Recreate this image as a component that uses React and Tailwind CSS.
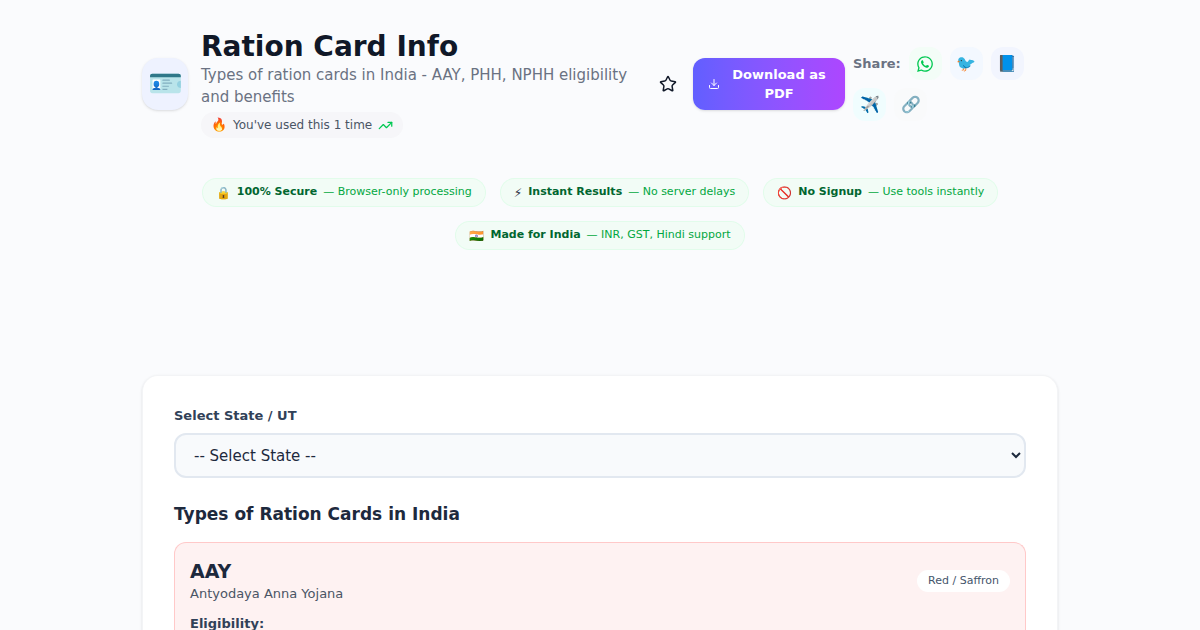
import React, { useState } from "react";
import { FaWhatsapp } from "react-icons/fa";
import { Star, TrendingUp, Download } from "lucide-react";

const trustBadges = [
  { icon: "🔒", title: "100% Secure", text: "Browser-only processing" },
  { icon: "⚡︎", title: "Instant Results", text: "No server delays" },
  { icon: "🚫", title: "No Signup", text: "Use tools instantly" },
  { icon: "🇮🇳", title: "Made for India", text: "INR, GST, Hindi support" },
];

const shareLinks = [
  { label: "WhatsApp", icon: <FaWhatsapp className="size-[18px]" />, style: "bg-green-50/70 text-green-500" },
  { label: "Twitter", icon: "🐦", style: "bg-blue-50/70" },
  { label: "Facebook", icon: "📘", style: "bg-indigo-50/70" },
  { label: "Telegram", icon: "✈️", style: "bg-cyan-50/70" },
  { label: "Copy link", icon: "🔗", style: "bg-gray-50" },
];

function Header() {
  return (
    <header className="flex items-center">
      <div className="flex h-[52px] w-[46px] shrink-0 items-center justify-center rounded-2xl bg-indigo-50 text-[28px] leading-none shadow-sm">
        🪪
      </div>

      <div className="ml-[13px] min-w-0 flex-1">
        <h1 className="text-[28px] leading-[34px] font-bold text-gray-900">Ration Card Info</h1>
        <p className="text-[15px] leading-[22px] text-gray-500">
          Types of ration cards in India - AAY, PHH, NPHH eligibility and benefits
        </p>
        <div className="mt-1 inline-flex h-[26px] items-center gap-[6px] rounded-full bg-gray-100/70 px-[10px] text-xs text-gray-600">
          <span className="text-[13px]">🔥</span>
          <span>You've used this 1 time</span>
          <TrendingUp className="size-[15px] text-green-500" />
        </div>
      </div>

      <div className="ml-4 flex shrink-0 items-center">
        <button aria-label="Add to favourites" className="p-2 text-gray-900">
          <Star className="size-[18px]" />
        </button>
        <button className="ml-2 flex h-[52px] w-[152px] items-center gap-2 rounded-xl bg-gradient-to-r from-[#615fff] to-[#ad46ff] px-[15px] text-[13px] leading-[19px] font-semibold text-white shadow-sm">
          <Download className="size-3 shrink-0" />
          <span className="flex-1 text-center">Download as PDF</span>
        </button>
        <div className="ml-2 flex w-[205px] flex-wrap items-center gap-2">
          <span className="text-[13px] font-semibold text-gray-500">Share:</span>
          {shareLinks.map((link) => (
            <button
              key={link.label}
              aria-label={link.label}
              className={`flex size-[33px] items-center justify-center rounded-xl text-base leading-none ${link.style}`}
            >
              {link.icon}
            </button>
          ))}
        </div>
      </div>
    </header>
  );
}

function TrustBadges() {
  return (
    <ul className="mt-10 flex flex-wrap justify-center gap-[14px]">
      {trustBadges.map((badge) => (
        <li
          key={badge.title}
          className="flex h-[29px] items-center gap-[6px] rounded-full border border-green-100/70 bg-green-50/80 px-[13px] text-[11px]"
        >
          <span className="text-xs text-gray-800">{badge.icon}</span>
          <span className="font-bold text-green-800">{badge.title}</span>
          <span className="text-green-600">— {badge.text}</span>
        </li>
      ))}
    </ul>
  );
}

function App() {
  const [state, setState] = useState("");

  return (
    <div className="min-h-screen bg-[#fafbfd] px-4 font-['DejaVu_Sans',sans-serif]">
      <div className="mx-auto max-w-[916px] pt-[30px]">
        <Header />
        <TrustBadges />

        <main className="mt-[125px] rounded-t-2xl border border-b-0 border-gray-100 bg-white px-[31px] pt-[30px] shadow-sm">
          <label htmlFor="state" className="block text-[13px] leading-[19px] font-semibold text-slate-700">
            Select State / UT
          </label>
          <select
            id="state"
            value={state}
            onChange={(e) => setState(e.target.value)}
            className="mt-2 h-[45px] w-full rounded-xl border-2 border-slate-200 bg-slate-50 px-[14px] text-[15px] text-slate-800"
          >
            <option value="">-- Select State --</option>
          </select>

          <h2 className="mt-6 text-[17px] leading-6 font-bold text-slate-800">
            Types of Ration Cards in India
          </h2>

          <section className="mt-4 rounded-t-xl border border-b-0 border-red-200 bg-red-50 px-[15px] pt-[15px]">
            <div className="flex items-center justify-between">
              <div>
                <h3 className="text-[19px] leading-[26px] font-bold text-slate-800">AAY</h3>
                <p className="text-[13px] leading-[19px] text-gray-600">Antyodaya Anna Yojana</p>
              </div>
              <span className="rounded-full bg-white px-[11px] py-[3px] text-[11px] leading-4 text-slate-600">
                Red / Saffron
              </span>
            </div>
            <p className="mt-[11px] text-[13px] leading-[19px] font-semibold text-slate-700">Eligibility:</p>
          </section>
        </main>
      </div>
    </div>
  );
}

export default App;
